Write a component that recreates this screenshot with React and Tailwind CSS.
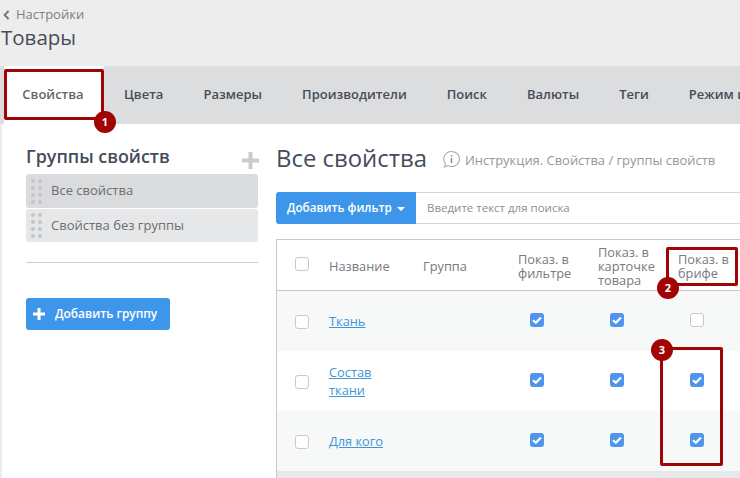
const font = { fontFamily: '"Open Sans", sans-serif' }

const tabs = ['Цвета', 'Размеры', 'Производители', 'Поиск', 'Валюты', 'Теги', 'Режим цен']

const rows = [
  { name: ['Ткань'], checks: [true, true, false], bg: 'bg-[#f7f8f8]' },
  { name: ['Состав', 'ткани'], checks: [true, true, true], bg: 'bg-white' },
  { name: ['Для кого'], checks: [true, true, true], bg: 'bg-[#f7f8f8]' },
]

const rowCols = 'grid grid-cols-[52px_94px_95px_80px_80px_1fr]'

const Check = ({ on }) =>
  on ? (
    <span className="flex h-[14px] w-[14px] items-center justify-center rounded-[3px] bg-[#4f94ef]">
      <svg width="10" height="8" viewBox="0 0 10 8" fill="none">
        <path d="M1 4.200 3.800 6.700 9 1.500" stroke="white" strokeWidth="2.200" />
      </svg>
    </span>
  ) : (
    <span className="block h-[14px] w-[14px] rounded-[3px] border border-[#c9c9c9] bg-white" />
  )

const Dots = () => (
  <div className="grid grid-cols-2 gap-x-[3px] gap-y-[3px]">
    {[0, 1, 2, 3, 4, 5, 6, 7].map((i) => (
      <span key={i} className="h-[4px] w-[4px] rounded-full bg-[#c4c5c7]" />
    ))}
  </div>
)

const Badge = ({ n, className }) => (
  <span className={`absolute flex h-[22px] w-[22px] items-center justify-center rounded-full bg-[#a00404] text-[11px] font-bold text-white ${className}`}>
    {n}
  </span>
)

const App = () => {
  return (
    <div style={font} className="relative h-[478px] w-[740px] overflow-hidden bg-white text-[#4b5058]">
      <div className="h-[66px] bg-[#ededed] pt-[6px]">
        <div className="flex h-[17px] items-center gap-[6px] pl-[3px] text-[13px] text-[#7b7f85]">
          <svg width="7" height="10" viewBox="0 0 7 10" fill="none">
            <path d="M5.6 1 1.6 5l4 4" stroke="#6f7377" strokeWidth="1.8" />
          </svg>
          Настройки
        </div>
        <div className="mt-[1px] pl-[1px] text-[20.500px] leading-[27px] text-[#454c5a]">Товары</div>
      </div>

      <div className="flex h-[58px] items-center bg-[#dcdddf] text-[13px] font-semibold">
        <div className="ml-[4px] flex h-full w-[100px] shrink-0 items-center justify-center bg-white pr-[2px] text-[#63676c]">Свойства</div>
        <div className="flex gap-[40px] whitespace-nowrap pl-[20px] text-[#484c55]">
          {tabs.map((t) => (
            <span key={t}>{t}</span>
          ))}
        </div>
      </div>

      <div className="flex border-l-2 border-[#ededed]">
        <div className="ml-[24px] w-[232px]">
          <div className="relative h-[50px] pt-[20px] text-[17.900px] font-semibold leading-[24px] text-[#454c5a]">
            Группы свойств
            <svg className="absolute right-[-1px] top-[28px]" width="17" height="17" viewBox="0 0 17 17">
              <path d="M6.5 0h4v6.500h6.500v4h-6.500v6.500h-4v-6.500h-6.500v-4h6.500z" fill="#c9cbcd" />
            </svg>
          </div>
          <div className="flex h-[34px] items-center gap-[9px] rounded-[3px] bg-[#dadbdc] pl-[5px] text-[13px] text-[#6b6e72]">
            <Dots />
            Все свойства
          </div>
          <div className="mt-px flex h-[33px] items-center gap-[9px] rounded-[3px] bg-[#e6e7e8] pl-[5px] text-[13px] text-[#6b6e72]">
            <Dots />
            Свойства без группы
          </div>
          <div className="mt-[20px] border-t border-[#cfcfcf]" />
          <button className="mt-[35px] flex h-[32px] w-[144px] items-center gap-[10px] rounded-[3px] bg-[#3e96ea] pl-[7px] text-[11.900px] font-semibold text-white">
            <svg width="12" height="12" viewBox="0 0 12 12">
              <path d="M4.500 0h3v4.500h4.500v3h-4.500v4.500h-3v-4.500h-4.500v-3h4.500z" fill="white" />
            </svg>
            Добавить группу
          </button>
        </div>

        <div className="ml-[18px] min-w-0 flex-1">
          <div className="flex h-[68px] items-start pt-[17px]">
            <h1 className="text-[23.900px] leading-[33px] text-[#454c5a]">Все свойства</h1>
            <svg className="ml-[15px] mt-[9px]" width="19" height="19" viewBox="0 0 19 19" fill="none">
              <path d="M9.500 1.500a8 7.500 0 1 1-4 14l-3 1.500.8-3.500a7.500 7.500 0 0 1 6.200-12z" stroke="#a8aaad" strokeWidth="1.100" />
              <path d="M9.500 8v5M9.500 5v1.500" stroke="#8a8c90" strokeWidth="1.500" />
            </svg>
            <span className="ml-[4px] mt-[10px] text-[12.950px] leading-[18px] text-[#94979b]">Инструкция. Свойства / группы свойств</span>
          </div>

          <div className="flex h-[32px]">
            <button className="flex h-full w-[140px] items-center gap-[5px] rounded-l-[3px] bg-[#3e96ea] pl-[11px] text-[11.700px] font-semibold text-white">
              Добавить фильтр
              <span className="mt-[2px] border-x-[4px] border-t-[4px] border-x-transparent border-t-white" />
            </button>
            <div className="flex flex-1 items-center border-y border-[#d4d4d4] pl-[11px] text-[11.500px] text-[#8b8e92]">
              Введите текст для поиска
            </div>
          </div>

          <div className="mt-[15px] border-l border-t border-[#c9c9c9]">
            <div className={`${rowCols} h-[51px] items-center border-b border-[#c9c9c9] pt-[2px] text-[12.800px] leading-[14px] text-[#777a7e]`}>
              <div className="-mt-[4px] pl-[18px]">
                <Check on={false} />
              </div>
              <div>Название</div>
              <div>Группа</div>
              <div>
                Показ. в<br />
                фильтре
              </div>
              <div>
                Показ. в<br />
                карточке<br />
                товара
              </div>
              <div>
                Показ. в<br />
                брифе
              </div>
            </div>
            {rows.map((r) => (
              <div key={r.name[0]} className={`${rowCols} h-[60px] items-center ${r.bg}`}>
                <div className="mt-[2px] pl-[18px]">
                  <Check on={false} />
                </div>
                <a className="col-span-2 text-[12.800px] leading-[18px] text-[#3f97d6] underline">
                  {r.name.map((line) => (
                    <div key={line}>{line}</div>
                  ))}
                </a>
                {r.checks.map((c, i) => (
                  <div key={i} className="-mt-[2px] pl-[12px]">
                    <Check on={c} />
                  </div>
                ))}
              </div>
            ))}
            <div className="h-[10px] bg-[#e7e8e9]" />
          </div>
        </div>
      </div>

      <div className="absolute left-[4px] top-[69px] h-[51px] w-[100px] rounded-[2px] border-[3px] border-[#a00404]" />
      <Badge n="1" className="left-[94px] top-[111px]" />
      <div className="absolute left-[666px] top-[247px] h-[39px] w-[72px] rounded-[2px] border-[3px] border-[#a00404]" />
      <Badge n="2" className="left-[657px] top-[277px]" />
      <div className="absolute left-[660px] top-[347px] h-[119px] w-[63px] rounded-[2px] border-[3px] border-[#a00404]" />
      <Badge n="3" className="left-[651px] top-[339px]" />
    </div>
  )
}

export default App
